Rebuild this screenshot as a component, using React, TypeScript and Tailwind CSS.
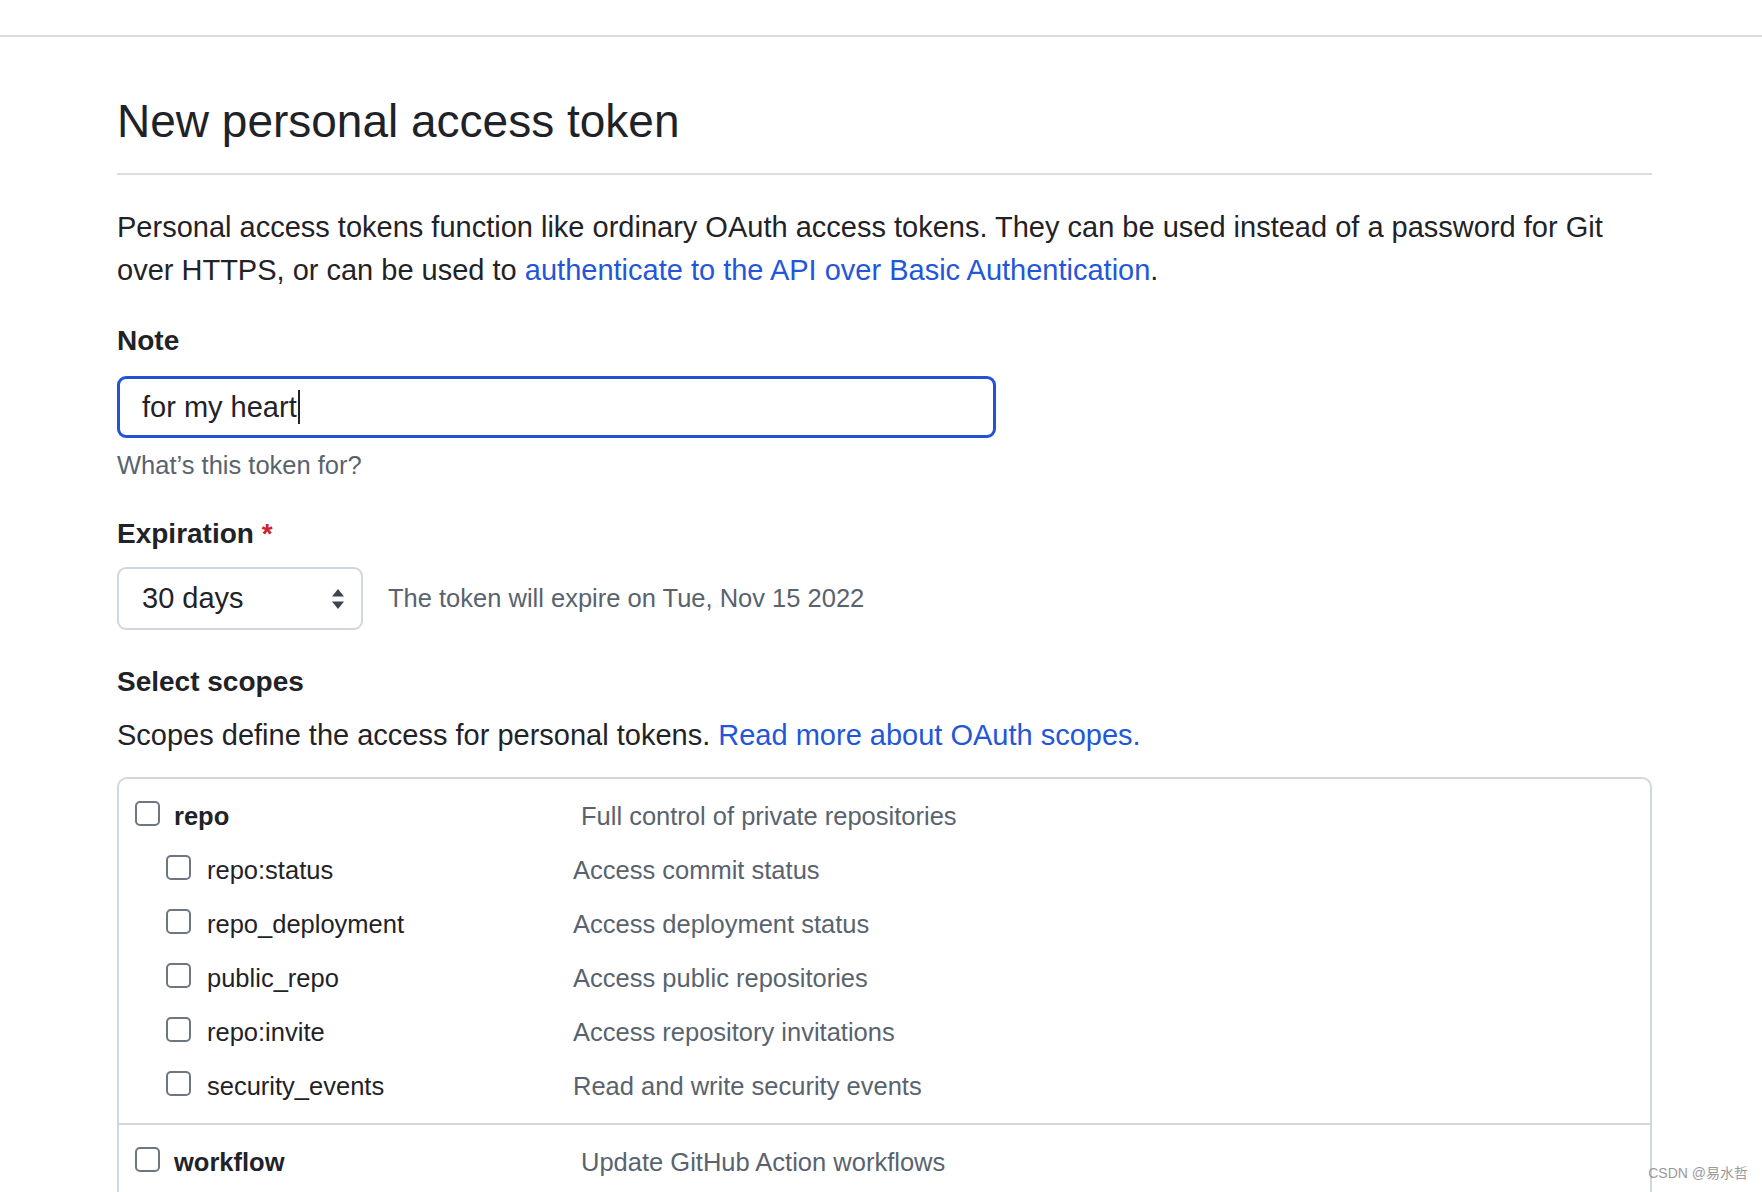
import React from "react";

interface Scope {
  name: string;
  description: string;
}

const repoScopes: Scope[] = [
  { name: "repo:status", description: "Access commit status" },
  { name: "repo_deployment", description: "Access deployment status" },
  { name: "public_repo", description: "Access public repositories" },
  { name: "repo:invite", description: "Access repository invitations" },
  { name: "security_events", description: "Read and write security events" },
];

const Checkbox: React.FC = () => (
  <span className="block w-[25px] h-[25px] shrink-0 rounded-[5px] border-2 border-[#6e7781] bg-white -mt-[6px]" />
);

const SelectArrows: React.FC = () => (
  <svg width="16" height="22" viewBox="0 0 16 22" className="text-[#3d444d]">
    <path d="M8 1 L14 8.5 H2 Z" fill="currentColor" />
    <path d="M8 21 L14 13.5 H2 Z" fill="currentColor" />
  </svg>
);

const App: React.FC = () => {
  return (
    <div
      className="relative h-[1192px] overflow-hidden bg-white text-[#1f2328]"
      style={{ fontFamily: '"Liberation Sans", Arial, "Noto Sans CJK SC", sans-serif' }}
    >
      {/* Top header edge */}
      <div className="h-[37px] border-b-2 border-[#d8dee4]" />

      <div className="pl-[117px] w-[1652px]">
        {/* Subhead */}
        <div className="mt-[56px] pb-[23px] border-b-2 border-[#d8dee4]">
          <h2 className="text-[46px] leading-[57px] font-normal">New personal access token</h2>
        </div>

        <div className="mt-[31px] text-[29px] leading-[43px]">
          <div>
            Personal access tokens function like ordinary OAuth access tokens. They can be used instead of a password for Git
          </div>
          <div className="flex">
            <span className="whitespace-pre">over HTTPS, or can be used to </span>
            <a className="text-[#2356d8]">authenticate to the API over Basic Authentication</a>
            <span>.</span>
          </div>
        </div>

        {/* Note */}
        <div className="mt-[28px] text-[28px] leading-[42px] font-bold">Note</div>
        <div className="mt-[14px] w-[879px] h-[62px] rounded-[9px] border-[3px] border-[#2352d6] flex items-center pl-[22px]">
          <span className="text-[29px] leading-none">for my heart</span>
          <span className="w-[2px] h-[34px] bg-[#1f2328] ml-[1px]" />
        </div>
        <div className="mt-[8px] text-[25.5px] leading-[38px] text-[#59636e]">What’s this token for?</div>

        {/* Expiration */}
        <div className="mt-[29px] text-[28px] leading-[42px] font-bold">
          Expiration <span className="text-[#cf222e]">*</span>
        </div>
        <div className="mt-[12px] flex items-center gap-[25px]">
          <div className="w-[246px] h-[63px] rounded-[9px] border-2 border-[#d0d7de] flex items-center justify-between pl-[23px] pr-[15px]">
            <span className="text-[29px]">30 days</span>
            <SelectArrows />
          </div>
          <span className="text-[25.5px] text-[#59636e]">The token will expire on Tue, Nov 15 2022</span>
        </div>

        {/* Scopes */}
        <div className="mt-[31px] text-[28px] leading-[42px] font-bold">Select scopes</div>
        <p className="mt-[11px] text-[29px] leading-[43px]">
          Scopes define the access for personal tokens. <a className="text-[#2356d8]">Read more about OAuth scopes.</a>
        </p>

        <div className="mt-[20px] w-[1535px] rounded-t-[10px] border-2 border-[#d0d7de] text-[25.5px]">
          <div className="pt-[10px] pb-[10px]">
            <div className="h-[54px] flex items-center pl-[16px]">
              <Checkbox />
              <span className="ml-[14px] w-[407px] font-bold">repo</span>
              <span className="text-[#59636e]">Full control of private repositories</span>
            </div>
            {repoScopes.map((scope) => (
              <div key={scope.name} className="h-[54px] flex items-center pl-[47px]">
                <Checkbox />
                <span className="ml-[16px] w-[366px]">{scope.name}</span>
                <span className="text-[#59636e]">{scope.description}</span>
              </div>
            ))}
          </div>
          <div className="border-t-2 border-[#d0d7de] pt-[10px] pb-[40px]">
            <div className="h-[54px] flex items-center pl-[16px]">
              <Checkbox />
              <span className="ml-[14px] w-[407px] font-bold">workflow</span>
              <span className="text-[#59636e]">Update GitHub Action workflows</span>
            </div>
          </div>
        </div>
      </div>

      {/* Watermark */}
      <div className="absolute right-[14px] bottom-[8px] text-[14px] text-[#9a9a9a]">CSDN @易水哲</div>
    </div>
  );
};

export default App;
